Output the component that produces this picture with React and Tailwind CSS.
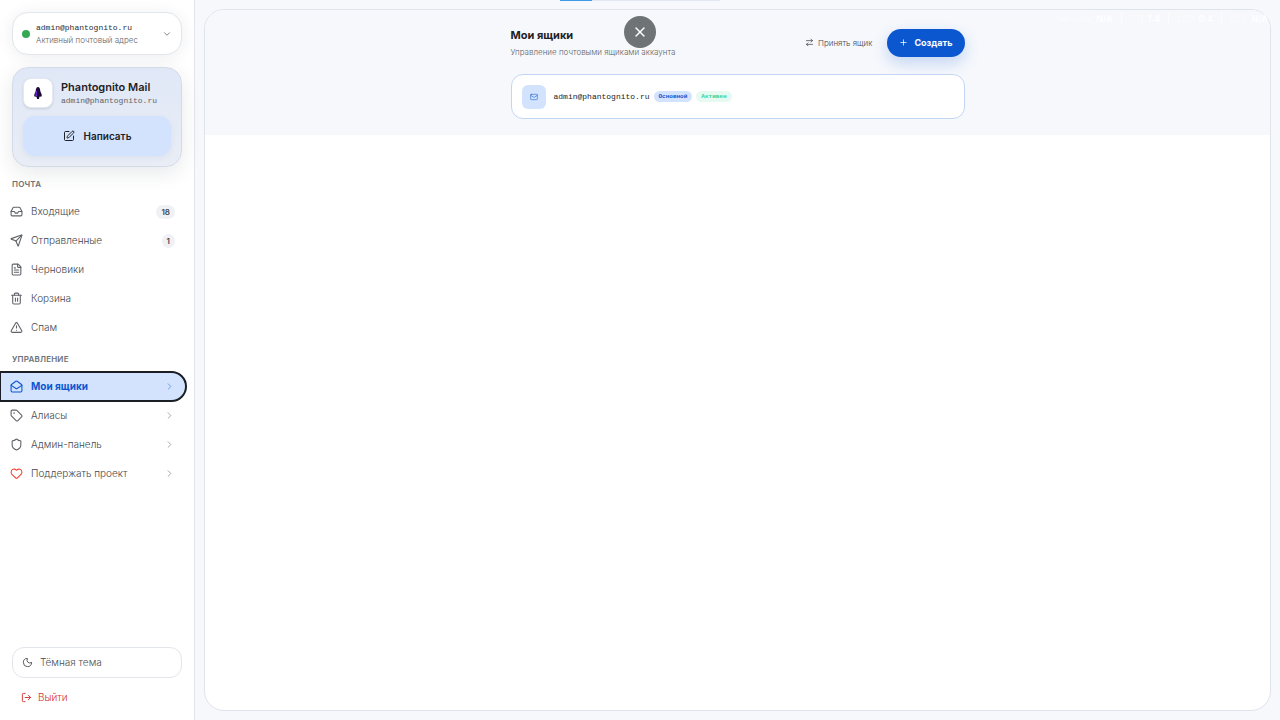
import {
  ArrowRightLeft,
  ChevronDown,
  ChevronRight,
  FileText,
  Heart,
  Inbox,
  LogOut,
  Mail,
  MailOpen,
  Moon,
  Plus,
  Send,
  Shield,
  SquarePen,
  Tag,
  Trash2,
  TriangleAlert,
  X,
} from 'lucide-react';
import { clsx } from 'clsx';

const mailLinks = [
  { label: 'Входящие', icon: Inbox, count: 18 },
  { label: 'Отправленные', icon: Send, count: 1 },
  { label: 'Черновики', icon: FileText },
  { label: 'Корзина', icon: Trash2 },
  { label: 'Спам', icon: TriangleAlert },
];

const manageLinks = [
  { label: 'Мои ящики', icon: MailOpen, active: true },
  { label: 'Алиасы', icon: Tag },
  { label: 'Админ-панель', icon: Shield },
  { label: 'Поддержать проект', icon: Heart, iconClass: 'text-[#f04a3a]' },
];

const stats = [
  { name: 'Network', value: 'N/A' },
  { name: 'TTI', value: '1.4' },
  { name: 'LCP', value: '0.4' },
  { name: 'CLS', value: 'N/A' },
];

export default function App() {
  return (
    <div className="relative flex min-h-screen bg-[#f6f8fc] font-['Inter',sans-serif] text-[#1f2124]">
      <Sidebar />
      <main className="flex min-w-0 flex-1 p-[9px]">
        <div className="flex-1 overflow-hidden rounded-[20px] border border-[#dfe3ea] bg-white">
          <MailboxPage />
        </div>
      </main>
      <Overlay />
    </div>
  );
}

function Sidebar() {
  return (
    <aside className="flex w-[195px] shrink-0 flex-col border-r border-[#e2e5ec] bg-white pt-3 pb-2">
      <div className="flex flex-col gap-3 px-3">
        <button
          type="button"
          className="flex h-[43px] items-center gap-[6px] rounded-2xl border border-[#e2e5ea] bg-white px-[9px] text-left shadow-[0_2px_16px_rgba(30,40,60,0.08)]"
        >
          <span className="size-2 shrink-0 rounded-full bg-[#34a853]" />
          <span className="flex min-w-0 flex-1 flex-col">
            <span className="font-['Liberation_Mono',monospace] text-[8px] leading-3 text-[#2b2d30]">admin@phantognito.ru</span>
            <span className="text-[8px] leading-3 font-light text-[#5f6368]">Активный почтовый адрес</span>
          </span>
          <ChevronDown size={10} aria-hidden="true" className="text-[#6b7075]" />
        </button>

        <section className="flex flex-col gap-2 rounded-2xl border border-[#d3dae8] bg-linear-to-b from-[#e0e8f7] to-[#e9edf5] px-[10px] py-[10px] shadow-[0_6px_20px_rgba(30,40,60,0.10)]">
          <div className="flex items-center gap-2">
            <span className="flex size-[30px] items-center justify-center rounded-lg border border-[#e3e8f2] bg-white shadow-sm">
              <Logo />
            </span>
            <div className="min-w-0">
              <h1 className="text-[11px] leading-[14px] font-semibold whitespace-nowrap">Phantognito Mail</h1>
              <p className="font-['Liberation_Mono',monospace] text-[8px] leading-[13px] text-[#5f6368]">admin@phantognito.ru</p>
            </div>
          </div>
          <button
            type="button"
            className="flex h-10 items-center justify-center gap-[9px] rounded-xl bg-[#d3e3fd] text-[10px] font-semibold shadow-[0_2px_6px_rgba(30,60,120,0.06)]"
          >
            <SquarePen size={12} aria-hidden="true" />
            Написать
          </button>
        </section>
      </div>

      <NavGroup title="Почта" links={mailLinks} />
      <NavGroup title="Управление" links={manageLinks} chevrons />

      <div className="mt-auto flex flex-col gap-1 px-3">
        <button
          type="button"
          className="flex h-[31px] items-center gap-[7px] rounded-xl border border-[#e2e5ea] px-[9px] text-[10px] font-light text-[#4a4d52]"
        >
          <Moon size={11} aria-hidden="true" />
          Тёмная тема
        </button>
        <button type="button" className="flex h-[30px] items-center gap-[6px] px-[9px] text-[10px] font-light text-[#d32f2f]">
          <LogOut size={11} aria-hidden="true" />
          Выйти
        </button>
      </div>
    </aside>
  );
}

function NavGroup({ title, links, chevrons = false }) {
  return (
    <nav aria-label={title} className="pt-3">
      <h2 className="px-3 pb-[7px] text-[8px] leading-[11px] font-semibold tracking-wide text-[#6b7075] uppercase">{title}</h2>
      {links.map(({ label, icon: Icon, iconClass, count, active }) => (
        <a
          key={label}
          href="#"
          aria-current={active ? 'page' : undefined}
          className={clsx(
            'mr-2 flex h-[29px] items-center gap-2 rounded-r-full pr-[11px] pl-[10px] text-[10px]',
            active
              ? 'bg-[#d3e3fd] font-bold text-[#0b57d0] outline-2 -outline-offset-1 outline-[#1b1e24]'
              : 'font-light text-[#44474c]'
          )}
        >
          <Icon size={13} aria-hidden="true" className={clsx('shrink-0', iconClass ?? (!active && 'text-[#5f6368]'))} />
          <span className="flex-1 whitespace-nowrap">{label}</span>
          {count && (
            <span className="rounded-full bg-[#eff1f4] px-[5px] text-[8px] leading-[14px] font-semibold text-[#44474c]">{count}</span>
          )}
          {chevrons && <ChevronRight size={11} aria-hidden="true" className="opacity-50" />}
        </a>
      ))}
    </nav>
  );
}

function MailboxPage() {
  return (
    <div className="bg-[#f6f8fc] px-4 pt-[17px] pb-4">
      <div className="mx-auto flex max-w-[454px] flex-col gap-4">
        <header className="flex items-center justify-between">
          <div>
            <h2 className="text-[11px] leading-4 font-bold">Мои ящики</h2>
            <p className="mt-[3px] text-[8px] leading-3 font-light text-[#5f6368]">Управление почтовыми ящиками аккаунта</p>
          </div>
          <div className="flex items-center gap-[15px]">
            <button type="button" className="flex items-center gap-1 text-[8px] font-light text-[#44474c]">
              <ArrowRightLeft size={9} aria-hidden="true" />
              Принять ящик
            </button>
            <button
              type="button"
              className="flex h-7 items-center gap-[6px] rounded-full bg-[#0b57d0] px-3 text-[9px] font-bold text-white shadow-[0_6px_16px_rgba(11,87,208,0.22)]"
            >
              <Plus size={9} aria-hidden="true" />
              Создать
            </button>
          </div>
        </header>

        <article className="flex h-[45px] items-center gap-2 rounded-xl border border-[#c2d5f3] bg-white px-[10px]">
          <span className="flex size-6 items-center justify-center rounded-md bg-[#d3e3fd] text-[#2f6fe0]">
            <Mail size={8} aria-hidden="true" />
          </span>
          <div className="flex items-center gap-1">
            <span className="font-['Liberation_Mono',monospace] text-[8px]">admin@phantognito.ru</span>
            <span className="rounded-full bg-[#d3e3fd] px-[5px] font-['Liberation_Mono',monospace] text-[6px] leading-[11px] font-bold text-[#0b57d0]">
              Основной
            </span>
            <span className="rounded-full bg-[#e6faf1] px-[5px] font-['Liberation_Mono',monospace] text-[6px] leading-[11px] font-bold text-[#34d399]">
              Активен
            </span>
          </div>
        </article>
      </div>
    </div>
  );
}

// Everything that floats above the page: load bar, close button, metrics
function Overlay() {
  return (
    <>
      <div className="absolute top-0 left-1/2 h-px w-40 -translate-x-1/2 bg-[#e3e8f0]">
        <div className="h-full w-1/5 bg-[#3f9be8]" />
      </div>
      <button
        type="button"
        aria-label="Закрыть"
        className="absolute top-4 left-1/2 flex size-8 -translate-x-1/2 items-center justify-center rounded-full bg-[#6f7376] text-white"
      >
        <X size={16} aria-hidden="true" />
      </button>
      <dl className="absolute top-3 right-1 flex divide-x divide-white/60 text-[9px] leading-[14px] text-white">
        {stats.map(({ name, value }) => (
          <div key={name} className="flex gap-1 px-2">
            <dt className="opacity-60">{name}</dt>
            <dd className="font-semibold">{value}</dd>
          </div>
        ))}
      </dl>
    </>
  );
}

function Logo() {
  return (
    <svg viewBox="0 0 12 16" className="h-4 w-3" aria-hidden="true">
      <path
        d="M6 2C4.500 2 3.800 4 3.600 6.500L2.200 9.800 2.400 11.600 4.600 11.800 5 14H7L7.400 11.800 9.600 11.600 9.800 9.800 8.400 6.500C8.200 4 7.500 2 6 2z"
        fill="#1c0a38"
      />
      <path d="M4.200 5.500 3 10.600 5 11.200 5 6z" fill="#6b1fd0" />
    </svg>
  );
}
